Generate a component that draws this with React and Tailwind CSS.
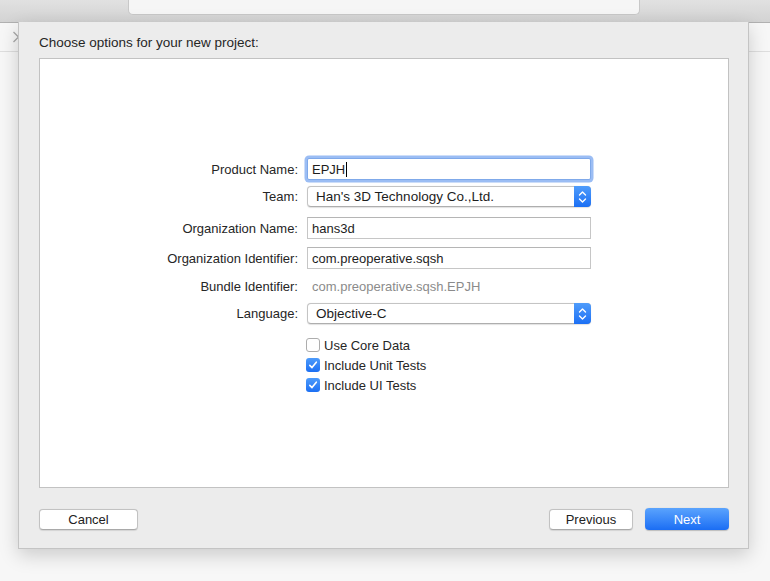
import React from "react";

function Stepper() {
  return (
    <div className="w-[17px] h-full rounded-r-[4px] bg-gradient-to-b from-[#4f9cfb] to-[#1b6ff4] flex items-center justify-center">
      <svg width="9" height="14" viewBox="0 0 9 14" fill="none">
        <path d="M1.5 5 L4.5 2 L7.5 5" stroke="white" strokeWidth="1.4" strokeLinecap="round" strokeLinejoin="round" />
        <path d="M1.5 9 L4.5 12 L7.5 9" stroke="white" strokeWidth="1.4" strokeLinecap="round" strokeLinejoin="round" />
      </svg>
    </div>
  );
}

function Popup({ value }) {
  return (
    <div className="h-full w-full flex items-stretch bg-white rounded-[4px] border border-[#c4c4c4] border-b-[#aeaeae] shadow-[0_0.5px_1px_rgba(0,0,0,0.12)]">
      <div className="flex-1 flex items-center pl-[8px] pt-px text-[13.5px] text-[#1d1d1d]">{value}</div>
      <div className="-my-px -mr-px">
        <Stepper />
      </div>
    </div>
  );
}

function Field({ value, focused }) {
  return (
    <div
      className={
        focused
          ? "h-full w-full flex items-center bg-white border border-[#7fa9ea] rounded-[2px] shadow-[0_0_0_2.5px_rgba(122,167,240,0.75)] pl-[4px] pt-px text-[13px] text-[#1d1d1d]"
          : "h-full w-full flex items-center bg-white border border-[#c6c6c6] border-t-[#b5b5b5] pl-[4px] pt-px text-[13px] text-[#1d1d1d]"
      }
    >
      {value}
      {focused && <span className="inline-block w-px h-[15px] bg-black ml-px" />}
    </div>
  );
}

function Row({ label, children, className }) {
  return (
    <div className={"flex items-center " + className}>
      <div className="w-[258px] pt-px text-right text-[13px] text-[#262626]">{label}</div>
      <div className="ml-[9px] w-[284px] h-full flex items-center">{children}</div>
    </div>
  );
}

function Check({ checked }) {
  if (checked) {
    return (
      <div className="w-[14px] h-[14px] rounded-[3px] bg-gradient-to-b from-[#4d9bfb] to-[#1c6ff3] flex items-center justify-center">
        <svg width="10" height="10" viewBox="0 0 10 10" fill="none">
          <path d="M1.8 5.4 L4 7.6 L8.3 2.2" stroke="white" strokeWidth="1.6" strokeLinecap="round" strokeLinejoin="round" />
        </svg>
      </div>
    );
  }
  return <div className="w-[14px] h-[14px] rounded-[3px] bg-white border border-[#adadad]" />;
}

function CheckRow({ checked, label }) {
  return (
    <div className="flex items-center h-[20px]">
      <div className="w-[258px]" />
      <div className="ml-[8px] flex items-center">
        <Check checked={checked} />
        <span className="ml-[4px] pt-px text-[13px] text-[#262626]">{label}</span>
      </div>
    </div>
  );
}

function Button({ children, className }) {
  return (
    <div
      className={
        "h-[21px] flex items-center justify-center pt-px rounded-[4px] bg-white border border-[#c2c2c2] border-b-[#a9a9a9] shadow-[0_0.5px_1px_rgba(0,0,0,0.1)] text-[13px] text-[#222] " +
        className
      }
    >
      {children}
    </div>
  );
}

export default function App() {
  return (
    <div className="relative w-[770px] h-[581px] overflow-hidden bg-[#f7f7f7] font-['Liberation_Sans',Arial,sans-serif]">
      {/* toolbar */}
      <div className="h-[23px] bg-gradient-to-b from-[#e1e1e1] to-[#d3d3d3] border-b border-[#b1b1b1]">
        <div className="ml-[128px] w-[512px] h-[15px] bg-[#f6f6f6] border border-t-0 border-[#c8c8c8] rounded-b-[5px]" />
      </div>
      {/* background window content */}
      <div className="relative h-[29px] border-b border-[#dedede] bg-[#f7f7f7]">
        <svg className="absolute left-[12px] top-[8px]" width="8" height="12" viewBox="0 0 8 12" fill="none">
          <path d="M1.5 1 L6.5 6 L1.5 11" stroke="#a8a8a8" strokeWidth="1.3" />
        </svg>
      </div>

      {/* sheet */}
      <div className="absolute left-[18px] top-[22px] w-[731px] h-[527px] bg-[#ececec] border-x border-b border-[#c4c4c4] shadow-[0_6px_18px_rgba(0,0,0,0.18)] flex flex-col">
        <div className="pt-[13px] pl-[20px] h-[36px] text-[13.5px] leading-[16px] text-[#262626]">
          Choose options for your new project:
        </div>
        <div className="ml-[20px] w-[690px] h-[430px] bg-white border border-[#c2c2c2] flex flex-col pt-[99px]">
          <Row label="Product Name:" className="h-[22px]">
            <Field value="EPJH" focused />
          </Row>
          <Row label="Team:" className="h-[21px] mt-[6px]">
            <Popup value="Han's 3D Technology Co.,Ltd." />
          </Row>
          <Row label="Organization Name:" className="h-[22px] mt-[10px]">
            <Field value="hans3d" />
          </Row>
          <Row label="Organization Identifier:" className="h-[22px] mt-[8px]">
            <Field value="com.preoperative.sqsh" />
          </Row>
          <Row label="Bundle Identifier:" className="h-[22px] mt-[6px]">
            <div className="pl-[5px] pt-px text-[13px] text-[#8b8b8b]">com.preoperative.sqsh.EPJH</div>
          </Row>
          <Row label="Language:" className="h-[21px] mt-[6px]">
            <Popup value="Objective-C" />
          </Row>
          <div className="mt-[11px] flex flex-col">
            <CheckRow label="Use Core Data" />
            <CheckRow label="Include Unit Tests" checked />
            <CheckRow label="Include UI Tests" checked />
          </div>
        </div>
        <div className="mt-[20px] ml-[20px] w-[690px] flex items-center">
          <Button className="w-[99px]">Cancel</Button>
          <div className="flex-1" />
          <Button className="w-[84px]">Previous</Button>
          <div className="ml-[12px] w-[84px] h-[22px] pt-px flex items-center justify-center rounded-[4px] bg-gradient-to-b from-[#5aa3fd] to-[#1a6df4] shadow-[0_0.5px_1px_rgba(0,0,0,0.2)] text-[13px] text-white">
            Next
          </div>
        </div>
      </div>
    </div>
  );
}
